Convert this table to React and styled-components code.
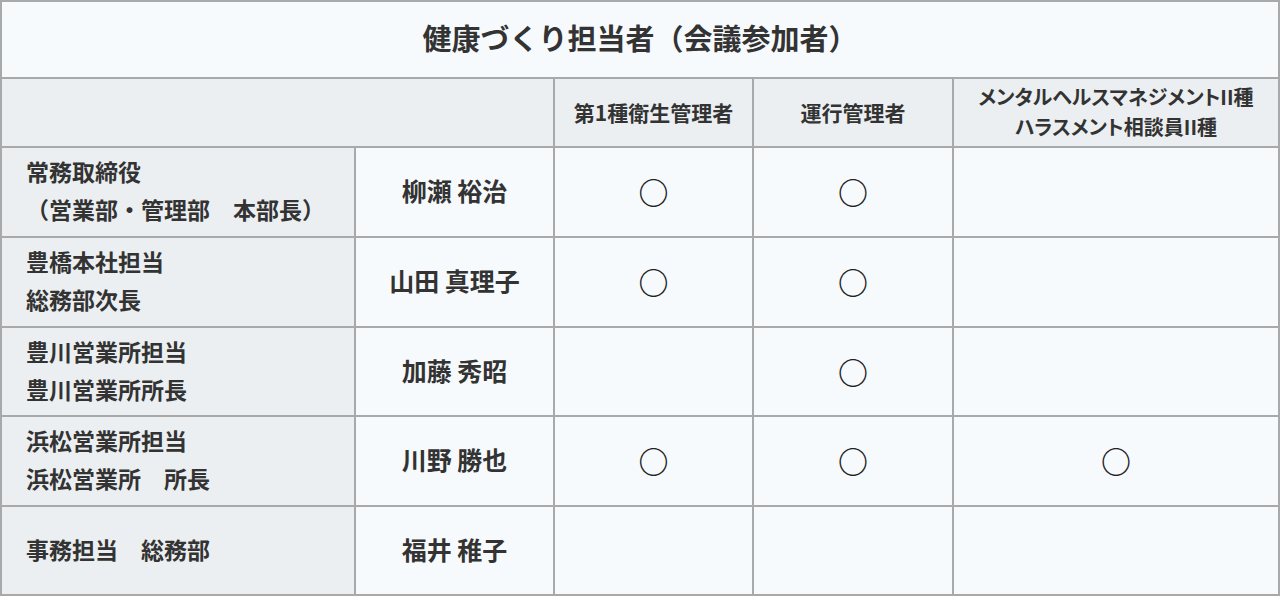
import styled, { createGlobalStyle } from "styled-components";

const GlobalStyle = createGlobalStyle`
  html, body {
    margin: 0;
    padding: 0;
    background: #ffffff;
  }
  body {
    font-family: "Noto Sans CJK JP", "Noto Sans", sans-serif;
    color: #333;
  }
`;

const Table = styled.div`
  display: grid;
  grid-template-columns: 352px 197px 197px 198px 324px;
  grid-template-rows: 75px 67px 88px 88px 87px 88px 87px;
  gap: 2px;
  padding: 2px;
  width: 1280px;
  box-sizing: border-box;
  background: #a9a9a9;
`;

const Cell = styled.div`
  display: flex;
  align-items: center;
  justify-content: center;
  text-align: center;
  background: #f7fafc;
  font-weight: 700;
  padding-bottom: 4px;
  box-sizing: border-box;
`;

const Title = styled(Cell)`
  grid-column: 1 / -1;
  font-size: 29px;
  padding-bottom: 5px;
`;

const HeadCell = styled(Cell)`
  grid-column: ${(p) => (p.$span ? `span ${p.$span}` : "auto")};
  background: #eceff1;
  font-size: ${(p) => (p.$palt ? "20px" : "21px")};
  line-height: 30px;
  padding-bottom: 2px;
  font-feature-settings: ${(p) => (p.$palt ? '"palt"' : "normal")};
`;

const RoleCell = styled(Cell)`
  justify-content: flex-start;
  text-align: left;
  padding-left: 24px;
  background: #eceff1;
  font-size: 23px;
  line-height: 38px;
`;

const NameCell = styled(Cell)`
  font-size: 25px;
`;

const MarkCell = styled(Cell)`
  font-size: 30px;
  color: #222;
  padding-bottom: 2px;
`;

const members = [
  { role: ["常務取締役", "（営業部・管理部　本部長）"], name: "柳瀬 裕治", marks: [true, true, false] },
  { role: ["豊橋本社担当", "総務部次長"], name: "山田 真理子", marks: [true, true, false] },
  { role: ["豊川営業所担当", "豊川営業所所長"], name: "加藤 秀昭", marks: [false, true, false] },
  { role: ["浜松営業所担当", "浜松営業所　所長"], name: "川野 勝也", marks: [true, true, true] },
  { role: ["事務担当　総務部"], name: "福井 稚子", marks: [false, false, false] },
];

export default function App() {
  return (
    <>
      <GlobalStyle />
      <Table>
        <Title>健康づくり担当者（会議参加者）</Title>
        <HeadCell $span={2} />
        <HeadCell>第1種衛生管理者</HeadCell>
        <HeadCell>運行管理者</HeadCell>
        <HeadCell $palt>
          メンタルヘルスマネジメントII種
          <br />
          ハラスメント相談員II種
        </HeadCell>
        {members.map((m) => (
          <>
            <RoleCell key={m.name + "r"}>
              <div>
                {m.role.map((line) => (
                  <div key={line}>{line}</div>
                ))}
              </div>
            </RoleCell>
            <NameCell key={m.name}>{m.name}</NameCell>
            {m.marks.map((on, i) => (
              <MarkCell key={m.name + i}>{on ? "○" : ""}</MarkCell>
            ))}
          </>
        ))}
      </Table>
    </>
  );
}
